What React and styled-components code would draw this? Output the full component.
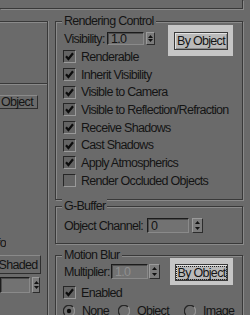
import React from "react";
import styled, { createGlobalStyle } from "styled-components";

const BG = "#6a6a6a";
const DARK = "#393939";
const LIGHT = "#8a8a8a";
const INK = "#141414";

const GlobalStyle = createGlobalStyle`
  html, body {
    margin: 0;
    padding: 0;
    background: ${BG};
  }
  body {
    font-family: "Liberation Sans", Arial, sans-serif;
    font-size: 12.5px;
    letter-spacing: -0.7px;
    color: ${INK};
  }
`;

const Screen = styled.div`
  width: 250px;
  height: 315px;
  overflow: hidden;
  display: flex;
  flex-direction: column;
`;

const TopPanel = styled.div`
  flex: none;
  width: 242px;
  height: 8px;
  border-bottom: 1px solid ${DARK};
  border-right: 1px solid ${DARK};
  box-shadow: 1px 1px 0 ${LIGHT};
`;

const Main = styled.div`
  display: flex;
  flex: 1;
`;

const LeftCol = styled.div`
  box-sizing: border-box;
  width: 48px;
  margin-top: 12px;
  display: flex;
  flex-direction: column;
  flex: none;
`;

const LeftBox = styled.div`
  box-sizing: border-box;
  height: ${(p) => (p.$height ? `${p.$height}px` : "auto")};
  flex: ${(p) => (p.$height ? "none" : 1)};
  border-top: 1px solid ${DARK};
  border-right: 1px solid ${DARK};
  box-shadow: inset 0 1px 0 ${LIGHT}, 1px 0 0 ${LIGHT};
  padding-top: ${(p) => p.$padTop || 0}px;
  display: flex;
  flex-direction: column;
  overflow: hidden;
`;

const ClipLabel = styled.div`
  width: 6px;
  height: 13px;
  line-height: 13px;
  margin-top: ${(p) => p.$top}px;
  display: flex;
  justify-content: flex-end;
  overflow: hidden;
  white-space: nowrap;
`;

const RightCol = styled.div`
  width: 188px;
  margin-left: 7px;
  display: flex;
  flex-direction: column;
  flex: none;
`;

const Group = styled.div`
  position: relative;
  box-sizing: border-box;
  height: ${(p) => p.$height}px;
  margin-top: ${(p) => p.$top}px;
  padding: ${(p) => p.$padTop}px 8px 0 7px;
  border: 1px solid ${DARK};
  box-shadow: inset 1px 1px 0 ${LIGHT}, 1px 1px 0 ${LIGHT};
  display: flex;
  flex-direction: column;
  flex: none;
`;

const GroupTitle = styled.span`
  position: absolute;
  top: -9px;
  left: 6px;
  padding: 0 2px;
  line-height: 16px;
  background: ${BG};
  white-space: nowrap;
`;

const Row = styled.div`
  display: flex;
  align-items: center;
  height: ${(p) => p.$h}px;
  margin-top: ${(p) => p.$top || 0}px;
  flex: none;
`;

const Label = styled.span`
  width: ${(p) => p.$w}px;
  margin-left: 1px;
  white-space: nowrap;
  flex: none;
`;

const Field = styled.div`
  box-sizing: border-box;
  width: ${(p) => p.$w}px;
  height: ${(p) => p.$h}px;
  padding-left: 3px;
  background: #727272;
  border-top: 1px solid #1c1c1c;
  border-left: 1px solid #1c1c1c;
  border-bottom: 1px solid ${LIGHT};
  border-right: 1px solid ${LIGHT};
  box-shadow: inset 1px 1px 0 #4c4c4c;
  color: ${(p) => (p.$disabled ? "#8f8f8f" : INK)};
  display: flex;
  align-items: center;
  flex: none;
  overflow: hidden;
`;

const SpinBox = styled.div`
  box-sizing: border-box;
  width: ${(p) => p.$w}px;
  height: ${(p) => p.$h}px;
  margin-left: ${(p) => p.$gap}px;
  background: #7b7b7b;
  border: 1px solid;
  border-color: #9a9a9a #2c2c2c #2c2c2c #9a9a9a;
  display: flex;
  flex-direction: column;
  align-items: center;
  justify-content: space-evenly;
  flex: none;
`;

const Highlight = styled.div`
  align-self: flex-start;
  margin-top: ${(p) => -p.$padTop}px;
  margin-left: ${(p) => p.$left}px;
  padding: ${(p) => p.$padTop}px 5px ${(p) => p.$padBottom}px ${(p) => p.$padLeft}px;
  background: #c6c6c6;
  flex: none;
`;

const PushButton = styled.div`
  box-sizing: border-box;
  width: ${(p) => p.$w}px;
  height: ${(p) => p.$h}px;
  margin-left: ${(p) => p.$left || 0}px;
  margin-top: ${(p) => p.$top || 0}px;
  background: ${(p) => (p.$lit ? "#bababa" : BG)};
  border: 1px solid;
  border-color: ${(p) =>
    p.$lit ? "#3a3a3a" : `${LIGHT} #2e2e2e #2e2e2e ${LIGHT}`};
  box-shadow: ${(p) =>
    p.$lit ? "inset 1px 1px 0 #e2e2e2, inset -1px -1px 0 #8c8c8c" : "none"};
  display: flex;
  align-items: center;
  justify-content: center;
  white-space: nowrap;
  flex: none;
`;

const FocusText = styled.span`
  padding: 0 1px;
  line-height: 12px;
  border: 1px dotted ${(p) => (p.$focus ? "#222" : "transparent")};
`;

const CheckList = styled.div`
  display: flex;
  flex-direction: column;
  margin-top: ${(p) => p.$top}px;
`;

const CheckRow = styled.div`
  display: flex;
  align-items: center;
  height: 17.7px;
  flex: none;
`;

const CheckBox = styled.div`
  box-sizing: border-box;
  width: 13px;
  height: 13px;
  background: #646464;
  border: 1px solid;
  border-color: #262626 #999 #999 #262626;
  display: flex;
  align-items: center;
  justify-content: center;
  flex: none;
`;

const CheckText = styled.span`
  margin-left: 5px;
  white-space: nowrap;
`;

const RadioItem = styled.div`
  width: ${(p) => p.$w}px;
  display: flex;
  align-items: center;
  flex: none;
`;

const RadioText = styled.span`
  margin-left: 7px;
  white-space: nowrap;
`;

function Arrows() {
  return (
    <>
      <svg width="5" height="3" viewBox="0 0 5 3">
        <polygon points="2.5,0 5,3 0,3" fill="#111" />
      </svg>
      <svg width="5" height="3" viewBox="0 0 5 3">
        <polygon points="0,0 5,0 2.5,3" fill="#111" />
      </svg>
    </>
  );
}

function Spinner({ value, fieldW, h, gap, spinW = 10, disabled }) {
  return (
    <>
      <Field $w={fieldW} $h={h} $disabled={disabled}>
        {value}
      </Field>
      <SpinBox $w={spinW} $h={h} $gap={gap}>
        <Arrows />
      </SpinBox>
    </>
  );
}

function Check({ label, checked }) {
  return (
    <CheckRow>
      <CheckBox>
        {checked && (
          <svg width="9" height="9" viewBox="0 0 9 9">
            <path d="M1 4.2 L3.4 7 L8 1.2" stroke="#0c0c0c" strokeWidth="2.2" fill="none" />
          </svg>
        )}
      </CheckBox>
      <CheckText>{label}</CheckText>
    </CheckRow>
  );
}

function Radio({ label, selected, w }) {
  return (
    <RadioItem $w={w}>
      <svg width="12" height="12" viewBox="0 0 12 12">
        <circle cx="6" cy="6" r="5.5" fill="#6e6e6e" />
        <path d="M10 2 A5.5 5.5 0 0 0 2 10" stroke="#262626" strokeWidth="1.3" fill="none" />
        <path d="M2 10 A5.5 5.5 0 0 0 10 2" stroke="#929292" strokeWidth="1.3" fill="none" />
        {selected && <circle cx="6" cy="6" r="2.2" fill="#0c0c0c" />}
      </svg>
      <RadioText>{label}</RadioText>
    </RadioItem>
  );
}

const renderChecks = [
  ["Renderable", true],
  ["Inherit Visibility", true],
  ["Visible to Camera", true],
  ["Visible to Reflection/Refraction", true],
  ["Receive Shadows", true],
  ["Cast Shadows", true],
  ["Apply Atmospherics", true],
  ["Render Occluded Objects", false],
];

export default function App() {
  return (
    <>
      <GlobalStyle />
      <Screen>
        <TopPanel />
        <Main>
          <LeftCol>
            <LeftBox $height={62} />
            <LeftBox $padTop={11}>
              <PushButton $w={58} $h={14} $left={-20}>
                By Object
              </PushButton>
              <ClipLabel $top={128}>Vertex Channel Info</ClipLabel>
              <PushButton $w={46} $h={19} $left={-5} $top={5}>
                Shaded
              </PushButton>
              <Row $h={16} $top={3}>
                <Spinner value="" fieldW={30} h={16} gap={2} spinW={8} />
              </Row>
            </LeftBox>
          </LeftCol>

          <RightCol>
            <Group $height={179} $top={12} $padTop={10}>
              <GroupTitle>Rendering Control</GroupTitle>
              <Row $h={13}>
                <Label $w={43}>Visibility:</Label>
                <Spinner value="1.0" fieldW={37} h={13} gap={2} spinW={9} />
                <Highlight $left={13} $padTop={7} $padBottom={6} $padLeft={6}>
                  <PushButton $w={54} $h={18} $lit>
                    <FocusText>By Object</FocusText>
                  </PushButton>
                </Highlight>
              </Row>
              <CheckList $top={3}>
                {renderChecks.map(([label, checked]) => (
                  <Check key={label} label={label} checked={checked} />
                ))}
              </CheckList>
            </Group>

            <Group $height={38} $top={6} $padTop={11}>
              <GroupTitle>G-Buffer</GroupTitle>
              <Row $h={15}>
                <Label $w={83}>Object Channel:</Label>
                <Spinner value="0" fieldW={42} h={15} gap={3} spinW={11} />
              </Row>
            </Group>

            <Group $height={80} $top={11} $padTop={8}>
              <GroupTitle>Motion Blur</GroupTitle>
              <Row $h={15}>
                <Label $w={47}>Multiplier:</Label>
                <Spinner value="1.0" fieldW={37} h={15} gap={1} spinW={11} disabled />
                <Highlight $left={10} $padTop={6} $padBottom={4} $padLeft={5}>
                  <PushButton $w={53} $h={17} $lit>
                    <FocusText $focus>By Object</FocusText>
                  </PushButton>
                </Highlight>
              </Row>
              <CheckList $top={5}>
                <Check label="Enabled" checked />
                <CheckRow>
                  <Radio label="None" selected w={55} />
                  <Radio label="Object" w={66} />
                  <Radio label="Image" w={60} />
                </CheckRow>
              </CheckList>
            </Group>
          </RightCol>
        </Main>
      </Screen>
    </>
  );
}
